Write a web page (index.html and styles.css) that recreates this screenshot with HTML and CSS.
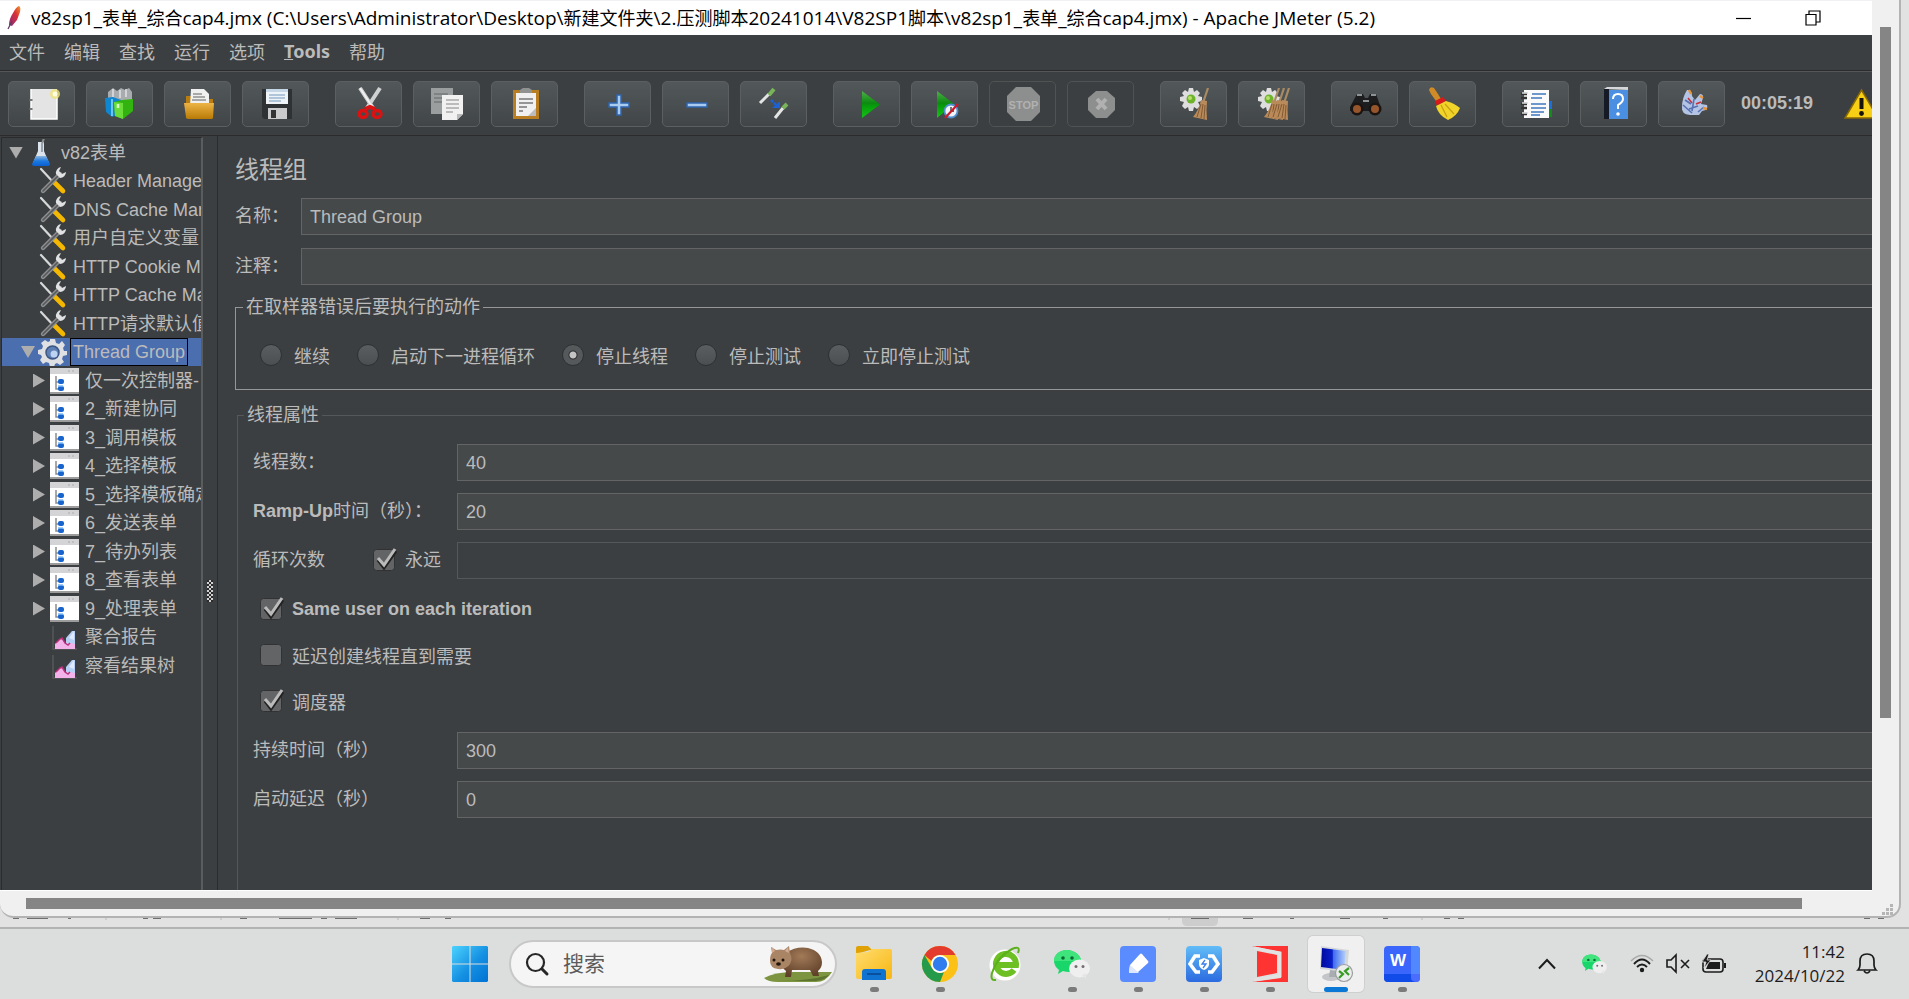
FILE: index.html
```html
<!DOCTYPE html>
<html lang="zh-CN">
<head>
    <meta charset="UTF-8">
    <meta name="viewport" content="width=device-width, initial-scale=1.0">
    <title>Apache JMeter (5.2)</title>
    <link rel="stylesheet" href="styles.css">
</head>
<body>

<!-- shared icons and gradients -->
<svg class="defs" width="0" height="0" aria-hidden="true">
    <defs>
        <linearGradient id="gPlay" x1="0" y1="0" x2="0" y2="1"><stop offset="0" stop-color="#4fb04a"/><stop offset=".45" stop-color="#0b8a10"/><stop offset=".55" stop-color="#079c0c"/><stop offset="1" stop-color="#13c417"/></linearGradient>
        <linearGradient id="gFolder" x1="0" y1="0" x2="0" y2="1"><stop offset="0" stop-color="#edb445"/><stop offset="1" stop-color="#b87a06"/></linearGradient>
        <linearGradient id="gBlue" x1="0" y1="0" x2="0" y2="1"><stop offset="0" stop-color="#61bcf7"/><stop offset="1" stop-color="#2b6be0"/></linearGradient>
        <linearGradient id="gWin" x1="0" y1="0" x2="1" y2="1"><stop offset="0" stop-color="#4cd3ff"/><stop offset=".55" stop-color="#1590e2"/><stop offset="1" stop-color="#0072d4"/></linearGradient>
        <linearGradient id="gExp" x1="0" y1="0" x2="1" y2="1"><stop offset="0" stop-color="#ffdd70"/><stop offset="1" stop-color="#f8b611"/></linearGradient>
        <linearGradient id="gScreen" x1="0" y1="0" x2="1" y2="0"><stop offset="0" stop-color="#0009a0"/><stop offset=".45" stop-color="#0a20c8"/><stop offset=".5" stop-color="#3f6cf0"/><stop offset="1" stop-color="#b9d4fb"/></linearGradient>
        <radialGradient id="gFur" cx=".5" cy=".3" r=".7"><stop offset="0" stop-color="#a27a58"/><stop offset="1" stop-color="#5f4029"/></radialGradient>
        <linearGradient id="gFeather" x1="1" y1="0" x2="0" y2="1"><stop offset="0" stop-color="#f49a20"/><stop offset=".4" stop-color="#d8303a"/><stop offset="1" stop-color="#8a2c7c"/></linearGradient>
        <linearGradient id="gFlask" x1="0" y1="0" x2="0" y2="1"><stop offset="0" stop-color="#8fb5dc"/><stop offset=".5" stop-color="#1b79e0"/><stop offset="1" stop-color="#0a5fd0"/></linearGradient>

        <symbol id="i-tools" viewBox="0 0 29 28">
            <path d="M3 2l13 14" stroke="#d5d7d8" stroke-width="2.2" stroke-linecap="round"/>
            <path d="M16 15l9 9" stroke="#f5b800" stroke-width="4.6" stroke-linecap="round"/>
            <path d="M22 7L5 24" stroke="#8d8f90" stroke-width="4.4" stroke-linecap="round"/>
            <path d="M20 9L5 24" stroke="#55585a" stroke-width="1.6" stroke-linecap="round"/>
            <path d="M23 0a6 6 0 0 0-5 7l4 4a6 6 0 0 0 6-6l-4 2-3-3z" fill="#dfe1e2"/>
        </symbol>
        <symbol id="i-flask" viewBox="0 0 29 28">
            <path d="M12 3h6v9l5 12q0 2-2 2H9q-2 0-2-2l5-12z" fill="#dce3ea"/>
            <path d="M10 17h10l4 8q0 2-2 2H8q-2 0-2-2z" fill="url(#gFlask)"/>
            <path d="M16 5l2-6" stroke="#8a8d8f" stroke-width="2"/>
            <path d="M16 4v9" stroke="#97a3ae" stroke-width="2"/>
        </symbol>
        <symbol id="i-gear" viewBox="0 0 29 28">
            <path d="M12 1h5l1 4 3 1 3-3 3 4-2 3 1 3 3 0v4l-4 1-1 3 2 3-4 3-3-2-2 1-1 3h-4l-1-4-3-1-3 2-3-4 2-3-1-2-3-1v-4l4-1 1-3-2-3 4-3 3 2 2-1z" fill="#dfe0e3"/>
            <circle cx="14.500" cy="14.500" r="6.500" fill="#5d7fb5" stroke="#3c5684" stroke-width="1.500"/>
            <circle cx="16" cy="16" r="3.500" fill="#bcd3f2"/>
        </symbol>
        <symbol id="i-ctrl" viewBox="0 0 29 28">
            <path d="M0 1h29v26H0z" fill="#fff"/>
            <path d="M0 1h29v6H0z" fill="#d4d4d6"/>
            <path d="M18 3h2v2h-2zM22 3h2v2h-2z" fill="#bfbfc2"/>
            <path d="M0 25h29v2H0z" fill="#9c9c9c"/>
            <path d="M6 9v13h4M6 15h4" stroke="#8c8c8c" stroke-width="1.500" fill="none"/>
            <rect x="8" y="12" width="6" height="5" rx="2" fill="#1764cf"/>
            <rect x="8" y="19" width="6" height="5" rx="2" fill="#1764cf"/>
            <path d="M8 19h5" stroke="#85bdf5" stroke-width="1.500"/>
        </symbol>
        <symbol id="i-report" viewBox="0 0 29 28">
            <path d="M3 3v23h24" stroke="#55585a" stroke-width="1.500" fill="none"/>
            <path d="M16 22V15l6-7h3v14z" fill="#b6cff5"/>
            <path d="M19 15l5-7v9z" fill="#dfeafd"/>
            <path d="M5 26v-5l4-4 3-2 3 5 3 2 2-2 5 1v5z" fill="#f3b3ea"/>
            <path d="M6 20l4-4 2-1 3 5 3 2 2-2" stroke="#b8327c" stroke-width="1.500" fill="none"/>
        </symbol>
        <symbol id="i-cog" viewBox="0 0 32 32">
            <path d="M10 0h4l1 4 3-2 3 3-2 3 4 1v4l-4 1 2 4-3 3-3-2-1 4h-4l-1-4-3 2-3-3 2-4-4-1V9l4-1-2-3 3-3 3 2z" fill="#dedede"/>
            <circle cx="12" cy="11" r="4.500" fill="#6db32b"/><circle cx="11" cy="10" r="2" fill="#b6e06a"/>
        </symbol>
        <symbol id="i-besom" viewBox="0 0 32 32">
            <path d="M25 0L20 15" stroke="#a98a63" stroke-width="2.200"/>
            <path d="M18 12l6 1q-1 9 0 19l-14-3q6-7 8-17z" fill="#b98a5a"/>
            <path d="M18 16l-4 13M20 16l-2 14M22 17l-1 14" stroke="#835a33" stroke-width="1"/>
        </symbol>
        <symbol id="i-wechat" viewBox="0 0 36 32">
            <path d="M13 2C5 2 0 7 0 13q0 5 5 9l-1 4 5-3q3 1 6 1c7 0 12-5 12-11S20 2 13 2z" fill="#19d66b"/>
            <path d="M13 2C5 2 0 7 0 13h27C27 7 20 2 13 2z" fill="#3fe57c"/>
            <ellipse cx="25.500" cy="20.500" rx="10.500" ry="9" fill="#efefef"/><path d="M28 27l4 4v-6z" fill="#e6e6e6"/>
            <circle cx="9" cy="10" r="1.800" fill="#0b6b35"/><circle cx="18" cy="10" r="1.800" fill="#0b6b35"/>
            <circle cx="22" cy="18.500" r="1.500" fill="#707070"/><circle cx="29" cy="18.500" r="1.500" fill="#707070"/>
        </symbol>
    </defs>
</svg>

<div class="session">
    <div class="app">
        <header class="titlebar">
            <svg class="feather" viewBox="0 0 14 24"><path d="M12 0q2 1 1 6l-3 8-5 6-3-1q0-6 4-12 3-6 6-7z" fill="url(#gFeather)"/><path d="M5 15L1 23" stroke="#5d3b66" stroke-width="1.200"/></svg>
            <h1>v82sp1_<span>表单</span>_<span>综合</span>cap4.jmx (C:\Users\Administrator\Desktop\<span>新建文件夹</span>\2.<span>压测脚本</span>20241014\V82SP1<span>脚本</span>\v82sp1_<span>表单</span>_<span>综合</span>cap4.jmx) - Apache JMeter (5.2)</h1>
            <div class="window-btns">
                <button type="button" aria-label="最小化"><svg width="16" height="16" viewBox="0 0 16 16"><path d="M0 8.500h15" stroke="#000" stroke-width="1.200"/></svg></button>
                <button type="button" aria-label="还原"><svg width="16" height="16" viewBox="0 0 16 16" fill="none" stroke="#000" stroke-width="1.200"><path d="M1 4.500h10v10.500H1zM4 4.500V1h11v11h-4"/></svg></button>
            </div>
        </header>

        <nav class="menubar">
            <button type="button">文件</button>
            <button type="button">编辑</button>
            <button type="button">查找</button>
            <button type="button">运行</button>
            <button type="button">选项</button>
            <button type="button" class="latin"><u>T</u>ools</button>
            <button type="button">帮助</button>
        </nav>

        <div class="toolbar">
            <div class="tool-group">
                <button type="button" class="tool" aria-label="新建"><svg viewBox="0 0 32 32"><path d="M5 1h26v30H5z" fill="#e4e4e4"/><path d="M5 1v30h26V8" stroke="#fff" stroke-width="1.500" fill="none"/><path d="M5 11v2M5 20v2" stroke="#777" stroke-width="3"/><circle cx="29" cy="6" r="5" fill="#efe27a" opacity=".8"/><circle cx="29" cy="6" r="2.500" fill="#fffde0"/></svg></button>
                <button type="button" class="tool" aria-label="模板"><svg viewBox="0 0 32 32"><path d="M4 4l5-4 4 3 4-3 4 2 4-2 3 4v9H4z" fill="#a8acae"/><path d="M9 1v8M16 2v8M22 1v8" stroke="#dfe1e2" stroke-width="1.500"/><path d="M1 10l8-1 8 3v13l-9 4-6-5z" fill="#0f86d0"/><path d="M8 11v17" stroke="#6fc3f3" stroke-width="2"/><path d="M10 14l8-2 11-1v12L19 31l-8-3z" fill="#33b310"/><path d="M10 14l9 1v16l-8-3z" fill="#6bdd3a"/><path d="M14 16v4" stroke="#d6ffc4" stroke-width="2.500"/></svg></button>
                <button type="button" class="tool" aria-label="打开"><svg viewBox="0 0 32 32"><path d="M4 8h6l2 3h19v19H4z" fill="#b87d10"/><path d="M9 1h13l5 5v12H8z" fill="#f0f0f0"/><path d="M11 6h9M11 9h12M10 12h14" stroke="#909090" stroke-width="1.300"/><path d="M2 15h30l-1 15q0 1-2 1H6q-2 0-2-2z" fill="url(#gFolder)"/></svg></button>
                <button type="button" class="tool" aria-label="保存"><svg viewBox="0 0 32 32"><path d="M2 1h30v30H4l-2-2z" fill="#2f3234"/><path d="M6 1h22v15H6z" fill="#eef3f8"/><path d="M6 1h22v3H6z" fill="#c5d6e6"/><path d="M9 7h16M9 10h16M9 13h12" stroke="#9ab6d0" stroke-width="1.300"/><path d="M8 20h19v11H8z" fill="#c9cbcc"/><path d="M11 22h5v8h-5z" fill="#333"/></svg></button>
            </div>
            <div class="tool-group">
                <button type="button" class="tool" aria-label="剪切"><svg viewBox="0 0 32 32" fill="none"><path d="M7 0l13 20M27 0L14 20" stroke="#cfd1d2" stroke-width="4"/><path d="M7 0l13 20" stroke="#f3f3f3" stroke-width="1.500"/><ellipse cx="10" cy="26" rx="4" ry="3.500" stroke="#dc1212" stroke-width="3.400"/><ellipse cx="24" cy="26" rx="4" ry="3.500" stroke="#dc1212" stroke-width="3.400"/><path d="M12 21l5-2 5 2" stroke="#dc1212" stroke-width="4"/></svg></button>
                <button type="button" class="tool" aria-label="复制"><svg viewBox="0 0 32 32"><path d="M0 0h22v26H0z" fill="#9b9e9f"/><path d="M3 6h14M3 10h14M3 14h8" stroke="#76797a" stroke-width="1.500"/><path d="M11 7h21v19l-6 6H11z" fill="#f1f1f1"/><path d="M32 26h-6v6z" fill="#b9b9b9"/><path d="M15 12h13M15 16h13M15 20h13M15 24h7" stroke="#a9a9a9" stroke-width="1.300"/></svg></button>
                <button type="button" class="tool" aria-label="粘贴"><svg viewBox="0 0 32 32"><path d="M4 2h26v29H4z" fill="#b97d22"/><path d="M7 5h20v23H7z" fill="#f0f0f0"/><path d="M11 5V2l3-2h6l3 2v3z" fill="#8f9290"/><path d="M10 11h14M10 15h14M10 19h8M10 23h4" stroke="#777" stroke-width="1.600"/><path d="M27 20v8h-8z" fill="#bcbcbc"/></svg></button>
            </div>
            <div class="tool-group">
                <button type="button" class="tool" aria-label="展开"><svg viewBox="0 0 32 32"><path d="M15 7h4v8h8v4h-8v8h-4v-8H7v-4h8z" fill="#a9cbf0" stroke="#2f65b0" stroke-width="1.500"/></svg></button>
                <button type="button" class="tool" aria-label="折叠"><svg viewBox="0 0 32 32"><path d="M7 15h20v4H7z" fill="#a9cbf0" stroke="#2f65b0" stroke-width="1.500"/></svg></button>
                <button type="button" class="tool" aria-label="切换"><svg viewBox="0 0 32 32" fill="none"><path d="M2 15l9-9M17 30l8-10" stroke="#e3e5e5" stroke-width="3"/><path d="M11 7l5-6M25 20l4-4" stroke="#79b35a" stroke-width="4"/><path d="M13 12l6 6" stroke="#1c62d6" stroke-width="2.500" stroke-dasharray="3 1"/><path d="M22 13v7h-8z" fill="#1c62d6"/></svg></button>
            </div>
            <div class="tool-group">
                <button type="button" class="tool" aria-label="启动"><svg viewBox="0 0 32 32"><path d="M11 3l18 13.500L11 30z" fill="url(#gPlay)"/></svg></button>
                <button type="button" class="tool" aria-label="不停顿开始"><svg viewBox="0 0 32 32"><path d="M8 3l17 13L8 30z" fill="url(#gPlay)"/><circle cx="22" cy="23" r="6.500" fill="#f1f5fa" stroke="#4f8fd0" stroke-width="1.800"/><path d="M22 23v-4M22 23h3" stroke="#333" stroke-width="1.300"/><path d="M16 30L29 16" stroke="#d0182a" stroke-width="2.200"/></svg></button>
                <button type="button" class="tool off" aria-label="停止" disabled><svg viewBox="0 0 32 32"><path d="M9-1h15l9 9v16l-9 9H9l-9-9V8z" fill="#8d8e8e"/><text x="16.500" y="20.500" text-anchor="middle" class="stop-word">STOP</text></svg></button>
                <button type="button" class="tool off" aria-label="关闭" disabled><svg viewBox="0 0 32 32"><path d="M11 3h11l8 7v12l-8 8H11l-8-8V10z" fill="#8d8e8e"/><path d="M12 11l9 10M21 11l-9 10" stroke="#b1b1b1" stroke-width="4"/></svg></button>
            </div>
            <div class="tool-group">
                <button type="button" class="tool" aria-label="清除"><svg viewBox="0 0 32 32"><use href="#i-cog" x="1" width="32" height="32"/><use href="#i-besom" x="5" width="32" height="32"/></svg></button>
                <button type="button" class="tool" aria-label="清除全部"><svg viewBox="0 0 32 32"><use href="#i-cog" x="1" width="32" height="32"/><use href="#i-besom" x="-2" width="32" height="32"/><use href="#i-besom" x="3" width="32" height="32"/><use href="#i-besom" x="8" width="32" height="32"/></svg></button>
            </div>
            <div class="tool-group">
                <button type="button" class="tool" aria-label="搜索"><svg viewBox="0 0 32 32"><path d="M8 6l6 0 2 4h3l2-4h6l5 14v3H1v-4z" fill="#1d1d1f"/><path d="M8 7h5M22 7h5M14 13h6" stroke="#8f9294" stroke-width="1.800"/><circle cx="8" cy="21" r="6.500" fill="#1a1412"/><circle cx="26" cy="21" r="6.500" fill="#1a1412"/><circle cx="8" cy="21" r="4" fill="#96552b"/><circle cx="26" cy="21" r="4" fill="#96552b"/></svg></button>
                <button type="button" class="tool" aria-label="重置搜索"><svg viewBox="0 0 32 32"><path d="M2 2q1-4 5-2l4 6 3 5-5 2-5-7z" fill="#d08a26"/><path d="M8 13l8-4 3 4-9 5z" fill="#d81a1a"/><path d="M9 18l10-5q8 2 14 7-3 8-12 12-10-5-12-14z" fill="#f0d429"/><path d="M14 17l6 12M18 16l9 10" stroke="#c9a010" stroke-width="1.200"/></svg></button>
            </div>
            <div class="tool-group">
                <button type="button" class="tool" aria-label="函数助手"><svg viewBox="0 0 32 32"><path d="M27 13h5v8h-5z" fill="#1b6fd8"/><path d="M27 21h5v8h-5z" fill="#128a1c"/><path d="M4 2h25v28H4z" fill="#fafafa"/><path d="M1 6h6M1 10h6M1 16h6M1 20h6M1 26h6" stroke="#333" stroke-width="2.400"/><path d="M2 5h6M2 15h6M2 25h6" stroke="#ddd" stroke-width="1.500"/><path d="M12 6h14M11 10h11M11 16h15M11 20h15M11 24h13M11 27h9" stroke="#4078bd" stroke-width="1.600"/></svg></button>
                <button type="button" class="tool" aria-label="帮助"><svg viewBox="0 0 32 32"><path d="M6 1l3-2h21v3z" fill="#d5d7d9"/><path d="M6 1h5v30H6z" fill="#151a26"/><path d="M11 2h19v29H11z" fill="#4b8fe2"/><path d="M15 11q0-5 5-5t5 5q0 3-5 6v4" stroke="#fff" stroke-width="2" fill="none"/><circle cx="20" cy="26" r="1.800" fill="#fff"/></svg></button>
                <button type="button" class="tool" aria-label="关于"><svg viewBox="0 0 32 32"><path d="M11 2q5-1 5 6l3 4 5-6q5 0 2 7l-1 3 6 1q2 5-5 6l-3 4-9 0q-9-1-8-8 0-9 5-17z" fill="#b4c4e4"/><path d="M9 12l6 4M13 21l9-3M7 17l9 8M18 11l-2 12M22 24l6-5" stroke="#5872b4" stroke-width="1.600"/><path d="M12 10l4 5M20 16l5-2" stroke="#c5303a" stroke-width="1.500"/><path d="M13 2l2 4M24 8l3 2M27 20l4 1" stroke="#e8953a" stroke-width="2.400"/></svg></button>
            </div>
            <span class="elapsed">00:05:19</span>
            <svg class="warn" viewBox="0 0 34 30"><path d="M16.500 1L33 29H0z" fill="#f7cf15" stroke="#8a6a00" stroke-width="1.500"/><path d="M16.500 9v11" stroke="#15130a" stroke-width="4"/><circle cx="16.500" cy="24.500" r="2.400" fill="#15130a"/></svg>
        </div>

        <div class="workspace">
            <ul class="tree">
                <li class="lv0"><i class="arrow open"></i><svg><use href="#i-flask"/></svg><span>v82表单</span></li>
                <li class="lv1"><i class="arrow none"></i><svg><use href="#i-tools"/></svg><span>Header Manager</span></li>
                <li class="lv1"><i class="arrow none"></i><svg><use href="#i-tools"/></svg><span>DNS Cache Manager</span></li>
                <li class="lv1"><i class="arrow none"></i><svg><use href="#i-tools"/></svg><span>用户自定义变量</span></li>
                <li class="lv1"><i class="arrow none"></i><svg><use href="#i-tools"/></svg><span>HTTP Cookie Manager</span></li>
                <li class="lv1"><i class="arrow none"></i><svg><use href="#i-tools"/></svg><span>HTTP Cache Manager</span></li>
                <li class="lv1"><i class="arrow none"></i><svg><use href="#i-tools"/></svg><span>HTTP请求默认值</span></li>
                <li class="lv1 selected"><i class="arrow open"></i><svg><use href="#i-gear"/></svg><span>Thread Group</span></li>
                <li class="lv2"><i class="arrow"></i><svg><use href="#i-ctrl"/></svg><span>仅一次控制器-</span></li>
                <li class="lv2"><i class="arrow"></i><svg><use href="#i-ctrl"/></svg><span>2_新建协同</span></li>
                <li class="lv2"><i class="arrow"></i><svg><use href="#i-ctrl"/></svg><span>3_调用模板</span></li>
                <li class="lv2"><i class="arrow"></i><svg><use href="#i-ctrl"/></svg><span>4_选择模板</span></li>
                <li class="lv2"><i class="arrow"></i><svg><use href="#i-ctrl"/></svg><span>5_选择模板确定</span></li>
                <li class="lv2"><i class="arrow"></i><svg><use href="#i-ctrl"/></svg><span>6_发送表单</span></li>
                <li class="lv2"><i class="arrow"></i><svg><use href="#i-ctrl"/></svg><span>7_待办列表</span></li>
                <li class="lv2"><i class="arrow"></i><svg><use href="#i-ctrl"/></svg><span>8_查看表单</span></li>
                <li class="lv2"><i class="arrow"></i><svg><use href="#i-ctrl"/></svg><span>9_处理表单</span></li>
                <li class="lv2"><i class="arrow none"></i><svg><use href="#i-report"/></svg><span>聚合报告</span></li>
                <li class="lv2"><i class="arrow none"></i><svg><use href="#i-report"/></svg><span>察看结果树</span></li>
            </ul>

            <div class="splitter"><span class="grip"></span></div>

            <form class="panel">
                <h2>线程组</h2>
                <div class="fields">
                    <div class="field head-field">
                        <label for="name">名称：</label>
                        <input type="text" id="name" value="Thread Group">
                    </div>
                    <div class="field head-field">
                        <label for="comment">注释：</label>
                        <input type="text" id="comment">
                    </div>
                </div>

                <fieldset class="on-error">
                    <legend>在取样器错误后要执行的动作</legend>
                    <div class="radios">
                        <label><input type="radio" name="action">继续</label>
                        <label><input type="radio" name="action">启动下一进程循环</label>
                        <label><input type="radio" name="action" checked>停止线程</label>
                        <label><input type="radio" name="action">停止测试</label>
                        <label><input type="radio" name="action">立即停止测试</label>
                    </div>
                </fieldset>

                <fieldset class="props">
                    <legend>线程属性</legend>
                    <div class="fields">
                        <div class="field">
                            <label for="threads">线程数：</label>
                            <input type="text" id="threads" value="40">
                        </div>
                        <div class="field">
                            <label for="ramp"><b>Ramp-Up</b>时间（秒）：</label>
                            <input type="text" id="ramp" value="20">
                        </div>
                        <div class="field loop-field">
                            <label for="loops">循环次数</label>
                            <label class="check"><input type="checkbox" checked>永远</label>
                            <input type="text" id="loops" disabled>
                        </div>
                    </div>
                    <div class="checks">
                        <label class="check"><input type="checkbox" checked><b>Same user on each iteration</b></label>
                        <label class="check"><input type="checkbox">延迟创建线程直到需要</label>
                        <label class="check"><input type="checkbox" checked>调度器</label>
                    </div>
                    <div class="fields">
                        <div class="field">
                            <label for="duration">持续时间（秒）</label>
                            <input type="text" id="duration" value="300">
                        </div>
                        <div class="field">
                            <label for="delay">启动延迟（秒）</label>
                            <input type="text" id="delay" value="0">
                        </div>
                    </div>
                </fieldset>
            </form>
        </div>
    </div>
    <div class="vscroll"><div class="thumb"></div></div>
    <div class="hscroll">
        <div class="thumb"></div>
        <svg class="resize" viewBox="0 0 12 12"><path d="M8 0h3v3H8zM4 4h3v3H4zM8 4h3v3H8zM0 8h3v3H0zM4 8h3v3H4zM8 8h3v3H8z" fill="#b5b5b5"/></svg>
    </div>
</div>

<!-- only the lower edge of this status bar shows -->
<div class="docbar">
    <svg width="1909" height="9" viewBox="0 0 1909 9" fill="none">
        <path d="M106 0v2M221 0v2M398 0v2M1169 0v2M1422 0v2" stroke="#b9b9b9"/>
        <path d="M1182 0h36v3q0 5-5 5h-26q-5 0-5-5z" fill="#cdcdcd"/>
        <path d="M13 0h6M27 0h21M68 0h3M143 0h5M153 0h8M240 0h7M279 0h33M321 0h6M335 0h22M420 0h10M445 0h6M1191 0h18M1243 0h10M1290 0h4M1340 0h10M1383 0h5M1444 0h6M1458 0h6M1864 0h6M1878 0h6" stroke="#4a4a4a" stroke-width="1.600"/>
    </svg>
</div>

<footer class="taskbar">
    <div class="dock">
        <button type="button" class="start" aria-label="开始"><svg viewBox="0 0 36 36" width="36" height="36"><path d="M1 0h16.500v17.500H0V1zM18.500 0H35l1 1v16.500H18.500zM0 18.500h17.500V36H1l-1-1zM18.500 18.500H36V35l-1 1H18.500z" fill="url(#gWin)"/></svg></button>
        <div class="search">
            <svg width="24" height="24" viewBox="0 0 24 24" fill="none" stroke="#262626"><circle cx="10.500" cy="10.500" r="8.500" stroke-width="2.200"/><path d="M17 17l5 5" stroke-width="3" stroke-linecap="round"/></svg>
            <input type="text" placeholder="搜索" aria-label="搜索">
            <svg width="68" height="38" viewBox="0 0 68 38">
                <path d="M0 33q10-6 30-6h38q-6 10-16 10H14Q4 37 0 33z" fill="#7d9440"/>
                <path d="M14 36h38q9-1 13-6-20 6-51 6z" fill="#5c7430"/>
                <path d="M22 8q10-7 22-5 13 3 14 14 0 6-4 9l1 5h-6l-3-6-18 0-1 7h-6l1-6q-5-4-5-9z" fill="url(#gFur)"/>
                <path d="M7 2l5 3q5-1 8 0l5-4 1 7q3 6 0 11-4 6-12 5-8-1-8-8 0-6 2-8z" fill="#a98465"/>
                <path d="M8 2l3 4-3 2zM24 2l-3 4 4 2z" fill="#d3ab94"/>
                <circle cx="10" cy="15" r="1.500" fill="#1d120b"/><circle cx="19" cy="15" r="1.500" fill="#1d120b"/><ellipse cx="14.500" cy="19" rx="2.400" ry="1.800" fill="#21140d"/>
            </svg>
        </div>
        <button type="button" class="task run" aria-label="文件资源管理器"><svg viewBox="0 0 36 36"><path d="M0 2q0-2 2-2h10l4 4h-2L0 8z" fill="#e0a105"/><path d="M0 7l12-1 4-3h18q2 0 2 2v26q0 2-2 2H2q-2 0-2-2z" fill="url(#gExp)"/><path d="M6 34v-8q0-3 3-3h18q3 0 3 3v8z" fill="#0f74d1"/><path d="M11 28h14" stroke="#0a4f9c" stroke-width="2"/></svg></button>
        <button type="button" class="task run" aria-label="Chrome"><svg viewBox="0 0 36 36"><circle cx="18" cy="18" r="18" fill="#fbc116"/><path d="M18 0A18 18 0 0 1 33.600 9H18a9 9 0 0 0-8.500 6L2.400 9A18 18 0 0 1 18 0z" fill="#e33b2e"/><path d="M2.400 9l7.800 13.500A9 9 0 0 0 22 26l-4 10A18 18 0 0 1 2.400 9z" fill="#259a4b"/><circle cx="18" cy="18" r="9" fill="#fff"/><circle cx="18" cy="18" r="7.200" fill="#2f7cee"/></svg></button>
        <button type="button" class="task" aria-label="浏览器"><svg viewBox="0 0 36 36" fill="none"><circle cx="17" cy="19" r="15.500" fill="#fff"/><path d="M26 24a10 10 0 1 1 2-5H10" stroke="#6cc024" stroke-width="6"/><path d="M8 34q-6 1-4-7Q9 11 24 3q9-4 6 4" stroke="#5cb01c" stroke-width="2"/></svg></button>
        <button type="button" class="task run" aria-label="微信"><svg viewBox="0 -2 36 36"><use href="#i-wechat" width="36" height="32"/></svg></button>
        <button type="button" class="task run" aria-label="文档"><svg viewBox="0 0 36 36"><rect width="36" height="36" rx="4" fill="#5b8cff"/><path d="M10 19L20 8q1-1 2 0l6 7q1 1 0 2L18 26l-8 1q-1 0-1-1z" fill="#fff"/><path d="M9 26l1-7 9 8q-1 0-9 0z" fill="#dce6ff"/></svg></button>
        <button type="button" class="task run" aria-label="安全代码"><svg viewBox="0 0 36 36"><rect width="36" height="36" rx="4" fill="url(#gBlue)"/><path d="M14 10H9l-5 8 6 8h4M22 10h5l5 8-6 8h-4" stroke="#fff" stroke-width="3.600" fill="none"/><path d="M18 12l5 2v4q0 4-5 6-5-2-5-6v-4z" fill="#fff"/><path d="M19 14l-3 4h4l-3 4" stroke="#3a80e8" stroke-width="1.300" fill="none"/></svg></button>
        <button type="button" class="task run" aria-label="远程"><svg viewBox="0 0 36 36"><path d="M0 0h36v36H0l29-4V6z" fill="#fe3433"/><path d="M5 5l20 4v18L5 31z" fill="#fe3433"/><path d="M2 2l26 5v23L2 34" stroke="#e2e2e2" stroke-width="3" fill="none"/></svg></button>
        <button type="button" class="task active" aria-label="远程桌面连接"><svg viewBox="0 0 36 36"><ellipse cx="13" cy="31" rx="9" ry="4" fill="#c3c5c8"/><path d="M12 24h7v7h-8z" fill="#a9acb0"/><path d="M3 0l28 4-2 22-27-3z" fill="#d5d8db"/><path d="M4 2l24 3-2 19-23-3z" fill="url(#gScreen)"/><circle cx="26" cy="27" r="8.500" fill="#eceeee" stroke="#9a9d9f" stroke-width="1.200"/><path d="M21 25l4 3-4 4M31 22l-4 3 4 4" stroke="#3a9c25" stroke-width="2.200" fill="none"/></svg></button>
        <button type="button" class="task run" aria-label="文字处理"><svg viewBox="0 0 36 36"><rect width="36" height="36" rx="4" fill="#3b66fb"/><path d="M27 0h5q4 0 4 4v24h-9z" fill="#5187ff"/><path d="M0 28h32v8H4q-4 0-4-4z" fill="#124ce8"/><path d="M27 28h9v4q0 4-4 4-5-1-5-4z" fill="#4a6cff"/><text x="14" y="20" text-anchor="middle" class="w-mark">W</text></svg></button>
    </div>

    <div class="tray">
        <svg width="18" height="12" viewBox="0 0 18 12"><path d="M1 10.500L9 2l8 8.500" stroke="#1c1c1c" stroke-width="2" fill="none"/></svg>
        <svg class="tray-chat" width="25" height="22" viewBox="0 0 36 32"><use href="#i-wechat" width="36" height="32"/></svg>
        <svg width="24" height="20" viewBox="0 0 24 20" fill="none"><path d="M1 7Q12-4 23 7" stroke="#a9a9a9" stroke-width="1.600"/><path d="M4 10Q12 1 20 10M7 13q5-5 10 0" stroke="#1c1c1c" stroke-width="1.900"/><circle cx="12" cy="16" r="2.200" fill="#1c1c1c"/></svg>
        <svg width="24" height="20" viewBox="0 0 24 20" fill="none" stroke="#1c1c1c" stroke-width="1.600"><path d="M1 6h4l5-5v17l-5-5H1zM15 6l8 8M23 6l-8 8"/></svg>
        <svg width="25" height="20" viewBox="0 0 25 20"><rect x="1" y="5" width="20" height="13" rx="3" fill="none" stroke="#1c1c1c" stroke-width="1.600"/><path d="M4 15l3-7h11v7zM22 9h2v5h-2z" fill="#1c1c1c"/><path d="M5 0L0 8h4l-2 6 7-8H5l2-6z" fill="#1c1c1c" stroke="#dcdcdc" stroke-width=".800"/></svg>
        <div class="clock"><span>11:42</span><span>2024/10/22</span></div>
        <svg width="20" height="22" viewBox="0 0 20 22" fill="none" stroke="#1c1c1c" stroke-width="1.700"><path d="M1 17q2-2 2-5V8q0-7 7-7t7 7v4q0 3 2 5zM7 18q3 4 6 0"/></svg>
    </div>
</footer>

</body>
</html>
```
FILE: styles.css
```css
* {
    box-sizing: border-box;
}
body {
    margin: 0;
    height: 100vh;
    display: flex;
    flex-direction: column;
    overflow: hidden;
    background-color: #e2e2e2;
    color: #bbbbbb;
    font-family: "Liberation Sans", "Noto Sans CJK SC", sans-serif;
    font-size: 18px;
}
button, input {
    font: inherit;
    color: inherit;
}
button {
    margin: 0;
    padding: 0;
    border: none;
    background: none;
}
svg {
    display: block;
    overflow: visible;
}
.defs {
    position: absolute;
}

/* remote session window */
.session {
    flex: 1;
    min-height: 0;
    margin-right: 8px;
    display: grid;
    grid-template-columns: minmax(0, 1fr) 27px;
    grid-template-rows: minmax(0, 1fr) 25px;
    background-color: #f0f0f0;
    border-right: 2px solid #b3b3b3;
    border-bottom: 2px solid #b3b3b3;
    border-radius: 0 0 14px 14px;
}
.app {
    display: flex;
    flex-direction: column;
    min-width: 0;
    overflow: hidden;
    background-color: #3c3f41;
    border-bottom: 1px solid #ffffff;
}
.vscroll {
    padding: 27px 8px 0;
}
.vscroll .thumb {
    height: 80%;
    background-color: #858585;
}
.hscroll {
    grid-column: 1 / 3;
    display: flex;
    align-items: center;
    gap: 80px;
    padding: 0 5px 0 26px;
}
.hscroll .thumb {
    flex: 1;
    height: 11px;
    background-color: #858585;
}
.resize {
    width: 12px;
    height: 12px;
    align-self: flex-end;
}

/* title and menus */
.titlebar {
    height: 35px;
    flex: none;
    display: flex;
    align-items: center;
    padding-left: 7px;
    background-color: #ffffff;
    border-top: 1px solid #f0f0f5;
    color: #000000;
}
.feather {
    width: 14px;
    height: 24px;
    margin-right: 10px;
}
.titlebar h1 {
    flex: 1;
    margin: 0;
    font-family: "Open Sans", "Noto Sans CJK SC", sans-serif;
    font-size: 19px;
    font-weight: normal;
    line-height: 32px;
    white-space: nowrap;
}
.titlebar h1 span {
    font-size: 18px;
}
.window-btns {
    display: flex;
    gap: 53px;
    padding-right: 51px;
}
.menubar {
    height: 36px;
    flex: none;
    display: flex;
    align-items: center;
    gap: 19px;
    padding: 0 0 4px 9px;
    border-bottom: 1px solid #2b2b2b;
}
.menubar .latin {
    font-family: "Noto Sans", sans-serif;
    font-weight: bold;
}
.toolbar {
    height: 65px;
    flex: none;
    display: flex;
    align-items: center;
    gap: 26px;
    padding-left: 8px;
    border-top: 1px solid #555758;
    border-bottom: 1px solid #2b2b2b;
}
.tool-group {
    display: flex;
    flex: none;
    gap: 11px;
}
.tool {
    width: 67px;
    height: 46px;
    display: flex;
    align-items: center;
    justify-content: center;
    border: 1px solid #5c5f60;
    border-radius: 5px;
    background: linear-gradient(#52585a, #414547);
}
.tool.off {
    background: none;
    border-color: #505354;
}
.tool svg {
    width: 32px;
    height: 32px;
}
.stop-word {
    font-size: 11px;
    font-weight: bold;
    fill: #b1b1b1;
}
.elapsed {
    margin-left: -10px;
    font-weight: bold;
}
.warn {
    width: 34px;
    height: 30px;
    flex: none;
    margin-left: 6px;
}

/* test plan tree */
.workspace {
    flex: 1;
    min-height: 0;
    display: grid;
    grid-template-columns: 203px 15px minmax(0, 1fr);
}
.tree {
    margin: 1px 0 0 1px;
    padding: 0;
    list-style: none;
    overflow: hidden;
    border: 1px solid #2b2b2b;
    border-bottom: none;
    border-right: 2px solid #5a5d5e;
}
.tree li {
    height: 28px;
    display: flex;
    align-items: center;
    white-space: nowrap;
}
.tree li:nth-child(odd) {
    height: 29px;
}
.tree svg {
    width: 29px;
    height: 28px;
    flex: none;
    margin-right: 3px;
}
.tree span {
    padding: 0 2px;
    line-height: 26px;
    border: 1px solid transparent;
}
.lv0 {
    padding-left: 7px;
}
.lv1 {
    padding-left: 19px;
}
.lv2 {
    padding-left: 31px;
}
.tree .selected {
    background-color: #4b6eaf;
}
.selected span {
    border-color: #000000;
}
.arrow {
    flex: none;
    width: 12px;
    height: 14px;
    margin-right: 5px;
    background-color: #adadad;
    clip-path: polygon(0 0, 100% 50%, 0 100%);
}
.arrow.open {
    width: 14px;
    height: 12px;
    margin-right: 3px;
    clip-path: polygon(0 0, 100% 0, 50% 100%);
}
.arrow.none {
    visibility: hidden;
}
.splitter {
    display: flex;
    align-items: center;
    justify-content: center;
    border-right: 1px solid #2b2b2b;
}
.grip {
    width: 6px;
    height: 22px;
    margin-top: 156px;
    background: repeating-conic-gradient(#d0d0d0 0 25%, #2b2b2b 0 50%) 0 0 / 4px 4px;
}

/* thread group form */
.panel {
    min-width: 0;
    display: flex;
    flex-direction: column;
    padding: 18px 0 0 17px;
}
.panel h2 {
    margin: 0 0 12px;
    font-size: 24px;
    font-weight: normal;
    line-height: 32px;
}
.fields {
    display: grid;
    gap: 12px;
}
.panel > .fields {
    gap: 13px;
}
.field {
    display: flex;
    align-items: center;
}
.field > label {
    flex: none;
    width: 204px;
    line-height: 24px;
    padding-bottom: 2px;
    white-space: nowrap;
}
.head-field > label {
    width: 54px;
    margin-right: 12px;
}
.loop-field > label:first-child {
    width: 120px;
}
.field > .check {
    width: 84px;
}
.field input[type="text"] {
    flex: 1;
    min-width: 0;
    height: 37px;
    padding: 2px 8px 0;
    background-color: #45494a;
    border: 1px solid #646464;
    border-right: none;
    border-radius: 0;
    outline: none;
}
.field input[type="text"]:disabled {
    background-color: #3c3f41;
    border-color: #555758;
}
fieldset {
    min-width: 0;
    margin: 0;
    border: 1px solid #969696;
    border-right: none;
}
legend {
    padding: 0 3px;
    line-height: 26px;
}
.on-error {
    margin-top: 9px;
    padding: 23px 0 22px 24px;
}
.on-error legend {
    margin-left: -17px;
}
.radios {
    display: flex;
    gap: 27px;
}
.radios label {
    height: 24px;
    display: flex;
    align-items: center;
    gap: 12px;
}
.radios input {
    appearance: none;
    width: 22px;
    height: 22px;
    margin: 0;
    border: 1px solid #2e3032;
    border-radius: 50%;
    background: linear-gradient(#5a5e60, #4b4f51);
}
.radios input:checked {
    background: radial-gradient(circle, #c4c4c4 0 3px, #2b2b2b 4px, #55595b 5px);
}
.props {
    flex: 1;
    min-height: 0;
    margin: 12px 0 0 2px;
    padding: 16px 0 0 15px;
    border-color: #555758;
    border-bottom: none;
}
.props legend {
    margin-left: -9px;
}
.check {
    display: flex;
    align-items: center;
    gap: 8px;
}
.check input {
    appearance: none;
    width: 24px;
    height: 24px;
    margin: 0;
    background: url("data:image/svg+xml,%3Csvg xmlns='http://www.w3.org/2000/svg' viewBox='0 0 24 24'%3E%3Crect x='.5' y='1.500' width='21' height='21' rx='3' fill='%23626465' stroke='%23303234'/%3E%3C/svg%3E");
}
.check input:checked {
    background: url("data:image/svg+xml,%3Csvg xmlns='http://www.w3.org/2000/svg' viewBox='0 0 24 24'%3E%3Crect x='.5' y='1.500' width='21' height='21' rx='3' fill='%23626465' stroke='%23303234'/%3E%3Cpath d='M5 12l6 8L23 3' fill='none' stroke='%23222222' stroke-width='3'/%3E%3Cpath d='M5 10l6 7L22 1' fill='none' stroke='%23bbbbbb' stroke-width='3'/%3E%3C/svg%3E");
}
.checks {
    padding: 7px 0 8px 7px;
}
.checks .check {
    height: 46px;
}

/* strip of the window behind */
.docbar {
    height: 9px;
    flex: none;
    overflow: hidden;
}

/* taskbar */
.taskbar {
    height: 72px;
    flex: none;
    display: flex;
    justify-content: space-between;
    align-items: center;
    padding: 0 32px 0 452px;
    background-color: #dcdddd;
    border-top: 2px solid #b3b3b3;
    color: #1c1c1c;
}
.dock, .tray {
    display: flex;
    align-items: center;
}
.start {
    margin-right: 21px;
}
.search {
    width: 328px;
    height: 48px;
    display: flex;
    align-items: center;
    margin-right: 9px;
    padding: 0 3px 0 14px;
    background-color: #f5f5f5;
    border: 2px solid #c8c8c8;
    border-radius: 24px;
}
.search input {
    flex: 1;
    min-width: 0;
    padding: 0 0 0 14px;
    border: none;
    outline: none;
    background: none;
    font-size: 21px;
}
.search input::placeholder {
    color: #5b5b5b;
    opacity: 1;
}
.task {
    width: 56px;
    height: 56px;
    margin-right: 10px;
    display: flex;
    flex-direction: column;
    align-items: center;
    padding-top: 10px;
    border-radius: 5px;
}
.task svg {
    width: 36px;
    height: 36px;
    flex: none;
}
.task.run::after, .task.active::after {
    content: "";
    width: 9px;
    height: 5px;
    margin-top: 5px;
    border-radius: 3px;
    background-color: #7b7b7b;
}
.task.active {
    background-color: #f0f0f0;
    box-shadow: 0 0 0 1px #cfcfcf;
}
.task.active::after {
    width: 24px;
    background-color: #0a78d4;
}
.w-mark {
    font-size: 17px;
    font-weight: bold;
    fill: #ffffff;
}
.tray {
    gap: 12px;
}
.tray-chat {
    margin: 0 11px 0 14px;
}
.clock {
    display: flex;
    flex-direction: column;
    align-items: flex-end;
    margin-left: 16px;
    font-family: "Open Sans", sans-serif;
    font-size: 17px;
    line-height: 24px;
}
```
